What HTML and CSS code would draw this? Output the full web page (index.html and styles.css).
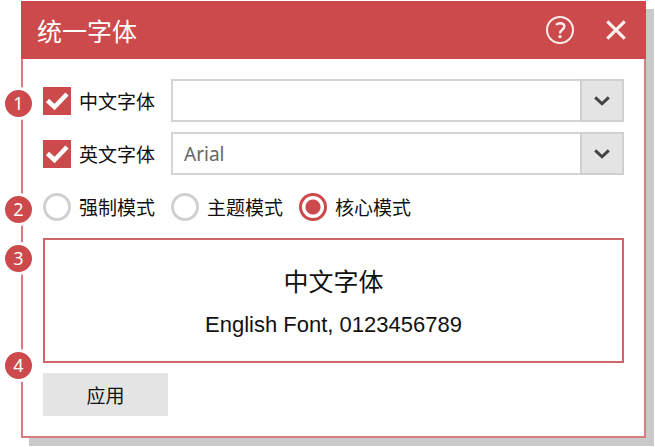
FILE: index.html
```html
<!DOCTYPE html>
<html lang="zh-CN">
<head>
  <meta charset="UTF-8" />
  <meta name="viewport" content="width=device-width, initial-scale=1.0"/>
  <title>统一字体</title>
  <link rel="stylesheet" href="styles.css">
</head>
<body>
  <main class="dialog">
    <header class="dialog-header">
      <h1>统一字体</h1>
      <button type="button" class="icon-btn" aria-label="帮助">
        <svg viewBox="0 0 28 28" fill="none" stroke="currentColor" stroke-width="2">
          <circle cx="14" cy="14" r="13"/>
          <path d="M10 8.8C11.2 7.8 12.6 7.2 14.2 7.2c2.5 0 4.1 1.300 4.100 3.300 0 3.100-4.200 3.300-4.200 6.400v.7" stroke-width="2.400"/>
          <circle cx="14" cy="20.6" r="1.7" fill="currentColor" stroke="none"/>
        </svg>
      </button>
      <button type="button" class="icon-btn" aria-label="关闭">
        <svg viewBox="0 0 28 28" fill="none" stroke="currentColor" stroke-width="3.2">
          <path d="M5.3 5.3l17.4 17.4M22.7 5.3L5.3 22.7"/>
        </svg>
      </button>
    </header>

    <form class="dialog-body">
      <div class="font-row">
        <input type="checkbox" id="useCn" class="check" checked>
        <label for="useCn">中文字体</label>
        <div class="select-box">
          <select aria-label="中文字体">
            <option></option>
          </select>
          <span class="arrow">
            <svg viewBox="0 0 16 10" fill="none" stroke="#444" stroke-width="3"><path d="M1.2 1.4L8 7.8l6.8-6.4"/></svg>
          </span>
        </div>
      </div>
      <div class="font-row">
        <input type="checkbox" id="useEn" class="check" checked>
        <label for="useEn">英文字体</label>
        <div class="select-box">
          <select aria-label="英文字体">
            <option>Arial</option>
          </select>
          <span class="arrow">
            <svg viewBox="0 0 16 10" fill="none" stroke="#444" stroke-width="3"><path d="M1.2 1.4L8 7.8l6.8-6.4"/></svg>
          </span>
        </div>
      </div>

      <div class="mode-row">
        <div class="mode">
          <input type="radio" name="mode" id="modeForce" class="radio">
          <label for="modeForce">强制模式</label>
        </div>
        <div class="mode">
          <input type="radio" name="mode" id="modeTheme" class="radio">
          <label for="modeTheme">主题模式</label>
        </div>
        <div class="mode">
          <input type="radio" name="mode" id="modeCore" class="radio" checked>
          <label for="modeCore">核心模式</label>
        </div>
      </div>

      <div class="preview">
        <p class="preview-cn">中文字体</p>
        <p class="preview-en">English Font, 0123456789</p>
      </div>

      <button type="button" class="apply">应用</button>
    </form>

    <span class="badge badge-fonts">1</span>
    <span class="badge badge-mode">2</span>
    <span class="badge badge-preview">3</span>
    <span class="badge badge-apply">4</span>
  </main>
</body>
</html>
```
FILE: styles.css
```css
* {
  box-sizing: border-box;
}
body {
  margin: 0;
  padding: 1px 9px 9px 21px;
  background-color: #fff;
  color: #111;
  font-family: 'Noto Sans CJK SC', sans-serif;
  font-size: 19px;
  line-height: 28px;
}
.dialog {
  position: relative;
  background-color: #fff;
  box-shadow: 8px 8px 0 #c9c9c9;
}
.dialog-header {
  display: flex;
  align-items: center;
  gap: 28px;
  padding: 11px 16px;
  background-color: #cc4a4b;
  color: #fff;
}
h1 {
  flex: 1;
  margin: 0;
  font-size: 25px;
  font-weight: 400;
  line-height: 36px;
}
.icon-btn {
  width: 28px;
  height: 28px;
  padding: 0;
  border: none;
  background: none;
  color: #fdeeee;
}
.icon-btn svg {
  display: block;
}
.dialog-body {
  display: flex;
  flex-direction: column;
  padding: 20px;
  border: 2px solid #d67c7e;
  border-top: none;
}
.font-row {
  display: flex;
  align-items: center;
  gap: 8px;
  margin-bottom: 10px;
}
.check,
.radio {
  appearance: none;
  flex: none;
  width: 28px;
  height: 28px;
  margin: 0;
}
.check {
  border: 2px solid #ccc;
}
.check:checked {
  border: none;
  background: #cc4a4b url("data:image/svg+xml,%3Csvg xmlns='http://www.w3.org/2000/svg' viewBox='0 0 28 28'%3E%3Cpath d='M4.500 13.500l7 6.500L24 7' fill='none' stroke='white' stroke-width='4.500'/%3E%3C/svg%3E");
}
.select-box {
  position: relative;
  flex: 1;
  margin-left: 8px;
}
select {
  display: block;
  appearance: none;
  width: 100%;
  height: 43px;
  padding: 0 56px 0 11px;
  border: 2px solid #d4d4d4;
  border-radius: 0;
  background-color: #fff;
  color: #666;
  font-family: 'Noto Sans', 'Noto Sans CJK SC', sans-serif;
  font-size: 19px;
}
/* drop-down arrow, drawn over the right end of the select */
.arrow {
  position: absolute;
  top: 0;
  right: 0;
  bottom: 0;
  display: flex;
  align-items: center;
  justify-content: center;
  width: 44px;
  border: 2px solid #d0d0d0;
  background-color: #e4e4e4;
  pointer-events: none;
}
.arrow svg {
  width: 16px;
  height: 10px;
}
.mode-row {
  display: flex;
  flex-wrap: wrap;
  gap: 16px;
  margin: 8px 0 17px;
}
.mode {
  display: flex;
  align-items: center;
  gap: 8px;
}
.radio {
  border: 3px solid #d0d0d0;
  border-radius: 50%;
}
.radio:checked {
  border-color: #cc4a4b;
  background: radial-gradient(circle, #cc4a4b 7px, #fff 8px);
}
.preview {
  padding: 22px 20px 21px;
  border: 2px solid #cc6668;
  text-align: center;
}
.preview-cn {
  margin: 0;
  font-size: 25px;
  line-height: 36px;
}
.preview-en {
  margin: 12px 0 0;
  font-family: 'Liberation Sans', sans-serif;
  font-size: 22px;
  line-height: 30px;
}
.apply {
  align-self: flex-start;
  width: 125px;
  height: 43px;
  margin-top: 10px;
  padding: 0;
  border: none;
  background-color: #e4e4e4;
  color: #111;
  font-family: inherit;
  font-size: 19px;
}
/* numbered callouts sitting on the left edge */
.badge {
  position: absolute;
  left: -19px;
  width: 33px;
  height: 33px;
  border: 3px solid #fff;
  border-radius: 50%;
  background-color: #cc4a4b;
  color: #fff;
  font-family: 'Noto Sans', sans-serif;
  font-size: 18px;
  line-height: 27px;
  text-align: center;
}
.badge-fonts {
  top: 86px;
}
.badge-mode {
  top: 192px;
}
.badge-preview {
  top: 241px;
}
.badge-apply {
  top: 348px;
}
```
